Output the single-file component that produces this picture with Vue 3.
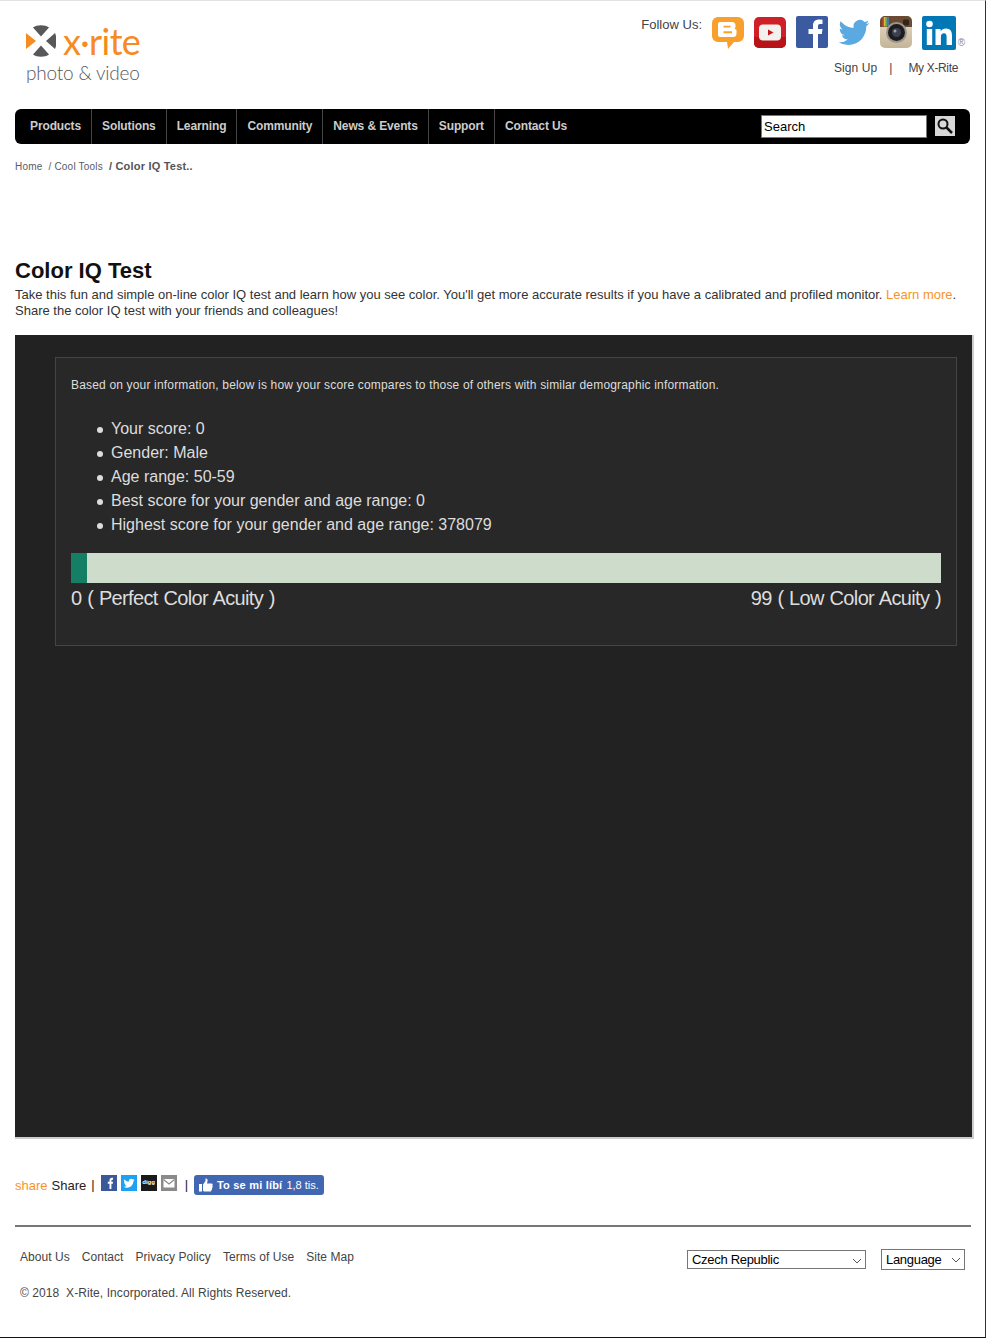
<script setup>
const navItems = ['Products', 'Solutions', 'Learning', 'Community', 'News & Events', 'Support', 'Contact Us']
const stats = [
  'Your score: 0',
  'Gender: Male',
  'Age range: 50-59',
  'Best score for your gender and age range: 0',
  'Highest score for your gender and age range: 378079',
]
const footerLinks = ['About Us', 'Contact', 'Privacy Policy', 'Terms of Use', 'Site Map']
const birdPath = 'M23.95 4.57a10 10 0 0 1-2.82.78 4.96 4.96 0 0 0 2.16-2.72c-.95.55-2 .96-3.12 1.18a4.92 4.92 0 0 0-8.38 4.48C7.69 8.1 4.07 6.13 1.64 3.16a4.93 4.93 0 0 0 1.52 6.57 4.9 4.9 0 0 1-2.23-.62v.06a4.92 4.92 0 0 0 3.95 4.83 4.9 4.9 0 0 1-2.22.08 4.93 4.93 0 0 0 4.6 3.42A9.87 9.87 0 0 1 0 19.54a13.94 13.94 0 0 0 7.55 2.21c9.06 0 14-7.5 14-14 0-.21 0-.42-.01-.63a10 10 0 0 0 2.41-2.55z'
const score = 0
const fillWidth = (score + 16) + 'px'
</script>

<template>
  <div class="page">
    <header class="top">
      <div class="logo">
        <div class="logo-row">
          <svg class="logo-mark" width="30" height="32" viewBox="0 0 30 32">
            <path d="M7 2.5C11 -.5 19 -.5 23 2.5L15 11.5Z" fill="#58585a" />
            <path d="M29 8C31 13 31 19 29 24L20 16Z" fill="#58585a" />
            <path d="M7 29.500C11 32.500 19 32.500 23 29.500L15 20.500Z" fill="#58585a" />
            <path d="M0 8L10 16L0 24Z" fill="#f68b1f" />
          </svg>
          <span class="logo-name">x·rite</span>
        </div>
        <div class="logo-sub">photo &amp; video</div>
      </div>
      <div class="top-right">
        <div class="follow">
          <span class="follow-label">Follow Us:</span>
          <svg class="ic-blog" width="32" height="32" viewBox="0 0 32 32">
            <path d="M6 0H26A6 6 0 0 1 32 6V19A6 6 0 0 1 26 25H22L16 32L15 25H6A6 6 0 0 1 0 19V6A6 6 0 0 1 6 0Z" fill="#f9a02c" />
            <path fill-rule="evenodd" d="M8 5H20A3.500 3.500 0 0 1 23.500 8.500V10L22.500 11.500L24.500 13V16.500A3.500 3.500 0 0 1 21 20H8A2 2 0 0 1 6 18V7A2 2 0 0 1 8 5ZM11.500 8.800V10.500H18.500V8.800ZM11.500 14.300V16.200H20V14.300Z" fill="#fff" />
          </svg>
          <svg class="ic-yt" width="32" height="31" viewBox="0 0 32 31">
            <rect width="32" height="31" rx="5" fill="#cf2027" />
            <path d="M0 20H32V26A5 5 0 0 1 27 31H5A5 5 0 0 1 0 26Z" fill="#b81319" />
            <rect x="5" y="7.500" width="22" height="16" rx="4" fill="#f2f1ee" />
            <path d="M14 12.500L19.500 15.500L14 18.500Z" fill="#c4161c" />
          </svg>
          <svg class="ic-fb" width="32" height="32" viewBox="0 0 32 32">
            <rect width="32" height="32" rx="2" fill="#3b5a9f" />
            <path d="M17 32V18H12.500V13H17V9.500C17 5.500 19.500 3.500 23 3.500C24.500 3.500 25.500 3.600 26.500 3.700V8H24C22.500 8 22 8.800 22 10V13H26.500L25.800 18H22V32Z" fill="#fff" />
          </svg>
          <svg class="ic-tw" width="32" height="27" viewBox="0 1.500 24 21">
            <path :d="birdPath" fill="#5aa9e0" />
          </svg>
          <svg class="ic-ig" width="32" height="32" viewBox="0 0 32 32">
            <defs>
              <linearGradient id="igBody" x1="0" y1="0" x2="0" y2="1">
                <stop offset="0" stop-color="#e6dcc6" />
                <stop offset="1" stop-color="#c4b598" />
              </linearGradient>
            </defs>
            <rect width="32" height="32" rx="5" fill="url(#igBody)" />
            <path d="M0 11V5A5 5 0 0 1 5 0H27A5 5 0 0 1 32 5V11H24A11 11 0 0 0 9 11Z" fill="#6b4a32" />
            <rect x="2.500" y="1" width="1.600" height="9.500" fill="#d8453b" />
            <rect x="4.100" y="1" width="1.600" height="9.500" fill="#ecc33c" />
            <rect x="5.700" y="1" width="1.600" height="9.500" fill="#5cab5c" />
            <rect x="7.300" y="1" width="1.600" height="9.500" fill="#4a7cc0" />
            <rect x="23" y="3.500" width="6" height="6" rx="1" fill="#2f2620" />
            <circle cx="16.500" cy="16.500" r="10.500" fill="#9a958c" />
            <circle cx="16.500" cy="16.500" r="8.500" fill="#1e1c1e" />
            <circle cx="16.500" cy="16.500" r="4.500" fill="#3c4150" />
            <circle cx="15" cy="15" r="1.500" fill="#9aa0b0" />
          </svg>
          <svg class="ic-in" width="34" height="34" viewBox="0 0 34 34">
            <rect width="34" height="34" rx="2" fill="#0177b5" />
            <circle cx="7.500" cy="8" r="3.300" fill="#fff" />
            <rect x="4.800" y="13" width="5.400" height="16" fill="#fff" />
            <path d="M13.500 13H18.600V15.300C19.600 13.800 21.500 12.600 24 12.600C28.500 12.600 30 15.500 30 20V29H24.600V21C24.600 19 24.200 17.200 22 17.200C19.800 17.200 18.900 18.800 18.900 21V29H13.500Z" fill="#fff" />
          </svg>
          <span class="reg">®</span>
        </div>
        <div class="account">
          <a class="sign-up">Sign Up</a>
          <span class="pipe">|</span>
          <a class="my-xrite">My X-Rite</a>
        </div>
      </div>
    </header>

    <nav class="nav">
      <ul class="nav-list">
        <li v-for="item in navItems" :key="item">{{ item }}</li>
      </ul>
      <div class="nav-search">
        <input class="search-input" type="text" value="Search" />
        <div class="search-btn">
          <svg width="18" height="18" viewBox="0 0 18 18">
            <circle cx="7" cy="7" r="4.500" fill="none" stroke="#111" stroke-width="2" />
            <path d="M10.500 10.500L16 16" stroke="#111" stroke-width="2.500" />
          </svg>
        </div>
      </div>
    </nav>

    <div class="crumbs">
      <span>Home</span><span class="crumb-next">/ Cool Tools</span><b class="crumb-last">/ Color IQ Test..</b>
    </div>

    <h1 class="title">Color IQ Test</h1>
    <p class="lead">
      Take this fun and simple on-line color IQ test and learn how you see color. You'll get more accurate results if you have a calibrated and profiled monitor. <a class="orange">Learn more</a>.<br />
      Share the color IQ test with your friends and colleagues!
    </p>

    <section class="panel">
      <div class="result">
        <p class="result-intro">Based on your information, below is how your score compares to those of others with similar demographic information.</p>
        <ul class="stats">
          <li v-for="s in stats" :key="s">{{ s }}</li>
        </ul>
        <div class="bar">
          <div class="bar-fill" :style="{ width: fillWidth }"></div>
        </div>
        <div class="bar-labels">
          <span>0 ( Perfect Color Acuity )</span>
          <span>99 ( Low Color Acuity )</span>
        </div>
      </div>
    </section>

    <div class="share">
      <span class="orange">share</span>
      <span class="share-word">Share</span>
      <span class="share-pipe">|</span>
      <svg class="sq" width="16" height="16" viewBox="0 0 16 16">
        <rect width="16" height="16" fill="#3b5998" />
        <path d="M8.500 14V8.800H6.800V6.800H8.500V5.400C8.500 3.700 9.500 2.800 11 2.800H12V4.700H11.200C10.600 4.700 10.400 5 10.400 5.500V6.800H12L11.800 8.800H10.400V14Z" fill="#fff" />
      </svg>
      <svg class="sq" width="16" height="16" viewBox="0 0 16 16">
        <rect width="16" height="16" fill="#1da1f2" />
        <path :d="birdPath" fill="#fff" transform="translate(2.500 2.800) scale(.46)" />
      </svg>
      <div class="sq digg">digg</div>
      <svg class="sq" width="16" height="16" viewBox="0 0 16 16">
        <rect width="16" height="16" fill="#8a8a8a" />
        <rect x="2.500" y="4" width="11" height="8.500" fill="#fff" />
        <path d="M2.500 4.500L8 9L13.500 4.500" fill="none" stroke="#8a8a8a" stroke-width="1.200" />
      </svg>
      <span class="share-pipe second">|</span>
      <div class="like">
        <svg width="14" height="14" viewBox="0 0 14 14">
          <path d="M0 6H3V13.500H0ZM4 6.500L6.500 3V.5C8 .2 9 1.500 8.500 3.300L8 5.500H12.500C13.800 5.500 14 7 13.300 7.700C14 8.500 13.700 9.500 13 10C13.400 10.800 13 11.800 12.300 12C12.500 13 12 13.500 11 13.500H6C5 13.500 4 13 4 12.500Z" fill="#fff" />
        </svg>
        <b>To se mi líbí</b>
        <span>1,8 tis.</span>
      </div>
    </div>

    <footer class="foot">
      <div class="foot-left">
        <div class="foot-links">
          <a v-for="l in footerLinks" :key="l">{{ l }}</a>
        </div>
        <p class="copyright">© 2018&nbsp; X-Rite, Incorporated. All Rights Reserved.</p>
      </div>
      <div class="foot-right">
        <div class="sel sel-country">
          <select>
            <option>Czech Republic</option>
          </select>
          <svg width="10" height="6" viewBox="0 0 10 6"><path d="M1 1L5 5L9 1" fill="none" stroke="#555" /></svg>
        </div>
        <div class="sel sel-lang">
          <select>
            <option>Language</option>
          </select>
          <svg width="10" height="6" viewBox="0 0 10 6"><path d="M1 1L5 5L9 1" fill="none" stroke="#555" /></svg>
        </div>
      </div>
    </footer>
  </div>
</template>

<style scoped>
.page {
  box-sizing: border-box;
  width: 986px;
  height: 1338px;
  overflow: hidden;
  background: #fff;
  border-top: 1px solid #e2e2e2;
  border-right: 1px solid #333;
  border-bottom: 1px solid #111;
  font-family: "Liberation Sans", Arial, sans-serif;
  font-size: 12px;
  color: #444;
}

.top {
  display: flex;
  justify-content: space-between;
  height: 108px;
  padding-left: 26px;
}

.logo {
  padding-top: 20px;
}

.logo-row {
  display: flex;
  align-items: center;
  gap: 7px;
  height: 40px;
}

.logo-name {
  font-family: Lato, sans-serif;
  font-size: 36px;
  line-height: 40px;
  letter-spacing: -0.6px;
  color: #f68b1f;
}

.logo-sub {
  font-family: Lato, sans-serif;
  font-weight: 300;
  font-size: 19px;
  line-height: 24px;
  letter-spacing: -0.2px;
  color: #58585a;
}

.top-right {
  display: flex;
  flex-direction: column;
  align-items: flex-end;
  padding: 15px 27px 0 0;
}

.follow {
  display: flex;
  align-items: flex-start;
  gap: 10px;
  position: relative;
  padding-right: 2px;
}

.follow-label {
  font-size: 13px;
  line-height: 18px;
  color: #444;
}

.ic-blog, .ic-yt { margin-top: 1px; }
.ic-tw { margin-top: 3px; }

.reg {
  position: absolute;
  right: -7px;
  top: 21px;
  font-size: 10px;
  color: #888;
}

.account {
  display: flex;
  font-size: 12px;
  color: #444;
  margin-top: 11px;
  line-height: 14px;
}

.sign-up {
  letter-spacing: 0.1px;
}

.my-xrite {
  letter-spacing: -0.35px;
}

.pipe {
  margin: 0 16px 0 12px;
}

.nav {
  display: flex;
  justify-content: space-between;
  align-items: center;
  box-sizing: border-box;
  width: 955px;
  height: 35px;
  margin-left: 15px;
  background: #000;
  border-radius: 6px;
}

.nav-list {
  display: flex;
  height: 100%;
  margin: 0;
  padding: 0 0 0 5px;
  list-style: none;
}

.nav-list li {
  padding: 0 10px;
  line-height: 35px;
  font-size: 12px;
  font-weight: bold;
  letter-spacing: -0.12px;
  color: #ccc;
  border-right: 1px solid #444;
}

.nav-list li:last-child {
  border-right: 0;
}

.nav-search {
  display: flex;
  align-items: center;
  gap: 8px;
  padding-right: 15px;
}

.search-input {
  box-sizing: border-box;
  width: 166px;
  height: 23px;
  padding: 1px 2px;
  border: 1px solid #777;
  background: #fff;
  color: #000;
  font-family: "Liberation Sans", Arial, sans-serif;
  font-size: 13px;
}

.search-btn {
  display: flex;
  align-items: center;
  justify-content: center;
  width: 20px;
  height: 20px;
  margin-bottom: 1px;
  background: #d8d8d8;
}

.crumbs {
  padding: 16px 0 0 15px;
  font-size: 10px;
  line-height: 12px;
  letter-spacing: 0.2px;
  color: #5a5a68;
}

.crumb-next {
  margin-left: 6px;
}

.crumb-last {
  margin-left: 6px;
  font-size: 11px;
  color: #555;
}

.title {
  margin: 85px 0 0 15px;
  font-size: 22px;
  line-height: 26px;
  font-weight: bold;
  color: #111;
}

.lead {
  margin: 3px 0 0 15px;
  font-size: 13px;
  line-height: 16px;
  color: #333;
  white-space: nowrap;
}

.orange {
  color: #f7941e;
}

.panel {
  box-sizing: border-box;
  width: 959px;
  height: 804px;
  margin: 16px 0 0 15px;
  padding: 22px 15px 0 40px;
  background: #222;
  border-right: 2px solid #ccc;
  border-bottom: 2px solid #ccc;
}

.result {
  box-sizing: border-box;
  height: 289px;
  padding: 0 15px;
  background: #282828;
  border: 1px solid #444;
  color: #ddd;
}

.result-intro {
  margin: 20px 0 0;
  font-size: 12px;
  line-height: 14px;
  letter-spacing: 0.17px;
}

.stats {
  margin: 25px 0 0;
  padding-left: 40px;
  font-size: 16px;
  line-height: 24px;
  list-style: none;
}

.stats li {
  position: relative;
}

.stats li::before {
  content: "";
  position: absolute;
  left: -14px;
  top: 10px;
  width: 6px;
  height: 6px;
  border-radius: 50%;
  background: #ddd;
}

.bar {
  height: 30px;
  margin-top: 16px;
  background: #cedccb;
}

.bar-fill {
  height: 100%;
  background: #147f64;
}

.bar-labels {
  display: flex;
  justify-content: space-between;
  font-size: 20px;
  line-height: 30px;
  letter-spacing: -0.65px;
  word-spacing: 0.8px;
}

.share {
  display: flex;
  align-items: center;
  height: 20px;
  margin: 36px 0 0 15px;
  font-size: 13px;
  color: #222;
}

.share-word {
  margin-left: 4px;
}

.share-pipe {
  margin: 0 6px 0 5px;
  position: relative;
  top: -1px;
}

.share-pipe.second {
  margin: 0 6px 0 4px;
}

.sq {
  flex: none;
  margin-right: 4px;
  position: relative;
  top: -2px;
}

.digg {
  box-sizing: border-box;
  width: 16px;
  height: 16px;
  background: #1a1a1a;
  color: #fff;
  font-size: 6px;
  font-weight: bold;
  line-height: 15px;
  text-align: center;
}

.like {
  display: flex;
  align-items: center;
  gap: 4px;
  box-sizing: border-box;
  width: 130px;
  height: 20px;
  padding-left: 5px;
  background: #4267b2;
  border-radius: 3px;
  color: #fff;
  font-size: 11px;
  white-space: nowrap;
}

.like b {
  letter-spacing: 0.2px;
}

.foot {
  display: flex;
  justify-content: space-between;
  box-sizing: border-box;
  width: 956px;
  margin: 30px 0 0 15px;
  padding: 17px 6px 0 5px;
  border-top: 2px solid #777;
}

.foot-links {
  display: flex;
  gap: 12px;
  line-height: 26px;
  letter-spacing: 0.05px;
  color: #444;
}

.copyright {
  margin: 16px 0 0;
  line-height: 14px;
  letter-spacing: 0.07px;
  color: #444;
}

.foot-right {
  display: flex;
  align-items: flex-start;
  gap: 15px;
  padding-top: 5px;
}

.sel {
  position: relative;
  height: 19px;
}

.sel select {
  display: block;
  box-sizing: border-box;
  width: 100%;
  height: 100%;
  padding: 0 0 0 4px;
  appearance: none;
  border: 1px solid #767676;
  border-radius: 0;
  background: #fff;
  color: #000;
  font-family: "Liberation Sans", Arial, sans-serif;
  font-size: 13px;
  letter-spacing: -0.3px;
}

.sel svg {
  position: absolute;
  right: 4px;
  top: 8px;
  pointer-events: none;
}

.sel-country {
  width: 179px;
  margin-top: 1px;
}

.sel-lang {
  width: 84px;
  height: 21px;
}
</style>
